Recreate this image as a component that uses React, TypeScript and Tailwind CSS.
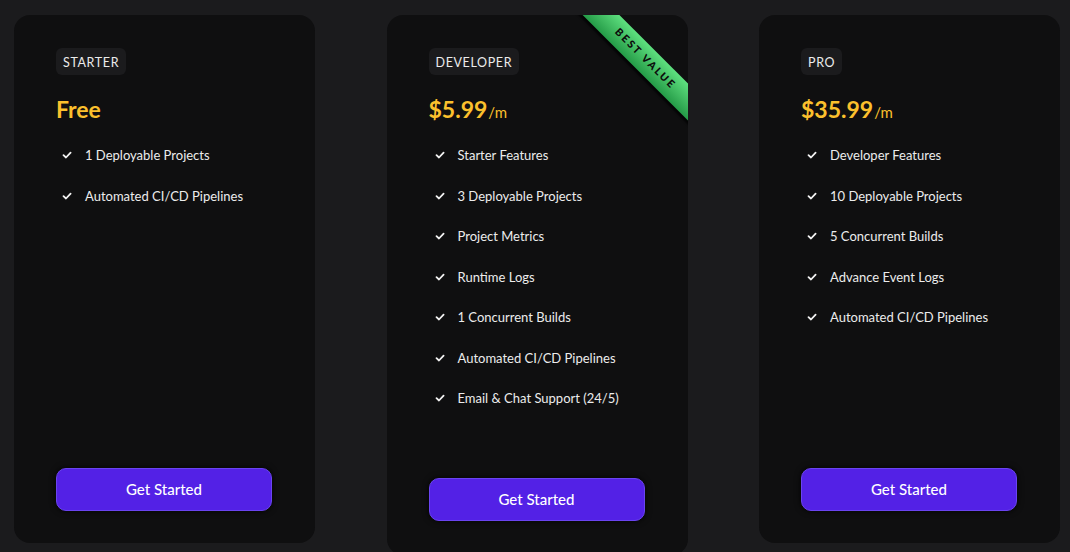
import React from 'react';

type Plan = {
  name: string;
  price: string;
  per?: string;
  features: string[];
  featured?: boolean;
};

const plans: Plan[] = [
  { name: 'STARTER', price: 'Free', features: ['1 Deployable Projects', 'Automated CI/CD Pipelines'] },
  {
    name: 'DEVELOPER',
    price: '$5.99',
    per: '/m',
    featured: true,
    features: [
      'Starter Features',
      '3 Deployable Projects',
      'Project Metrics',
      'Runtime Logs',
      '1 Concurrent Builds',
      'Automated CI/CD Pipelines',
      'Email & Chat Support (24/5)',
    ],
  },
  {
    name: 'PRO',
    price: '$35.99',
    per: '/m',
    features: [
      'Developer Features',
      '10 Deployable Projects',
      '5 Concurrent Builds',
      'Advance Event Logs',
      'Automated CI/CD Pipelines',
    ],
  },
];

const Check = () => (
  <svg width="10" height="10" viewBox="0 0 10 10" className="shrink-0">
    <path d="M1.5 5.2 L4 7.5 L8.6 2.6" fill="none" stroke="#f2f2f2" strokeWidth="1.8" strokeLinecap="round" strokeLinejoin="round" />
  </svg>
);

const Card = ({ plan }: { plan: Plan }) => (
  <div
    className={`relative overflow-hidden w-[301px] shrink-0 rounded-2xl bg-[#0f0f10] px-[42px] pt-[33px] pb-[32px] flex flex-col ${
      plan.featured ? 'h-[540px]' : 'h-[528px]'
    }`}
  >
    {plan.featured && (
      <div className="absolute left-[157px] top-[30px] w-[200px] h-[26px] rotate-45 bg-gradient-to-b from-[#5ee07f] to-[#249c48] shadow-[0_3px_2px_rgba(0,0,0,0.7)] flex items-center justify-center">
        <span className="text-[10.5px] font-black tracking-[0.2em] text-[#0b0b0b] pl-[3px]">BEST VALUE</span>
      </div>
    )}
    <div className="self-start rounded-md bg-[#1b1b1d] px-[7px] pt-[3px] h-[27px] flex items-center text-[12.5px] tracking-[0.05em] text-[#ececec]">
      {plan.name}
    </div>
    <div className="mt-[22px] h-[24px] flex items-end text-[#fbc02d]">
      <span className="text-[23px] font-bold leading-none">{plan.price}</span>
      {plan.per && <span className="text-[15px] leading-none ml-[1px] mb-[1px]">{plan.per}</span>}
    </div>
    <ul className="mt-[25px] flex flex-col gap-[22.5px]">
      {plan.features.map((f) => (
        <li key={f} className="flex items-center gap-[13px] pl-[6px] text-[13px] leading-[18px] text-[#ececec]">
          <Check />
          {f}
        </li>
      ))}
    </ul>
    <button
      className={`mt-auto ${plan.featured ? 'mb-[2px]' : ''} h-[43px] w-[216px] rounded-[10px] bg-[#5321e6] border border-[#6a44f0] text-[15px] font-medium text-white shadow-[0_0_6px_rgba(0,0,0,0.9)]`}
    >
      Get Started
    </button>
  </div>
);

export default function App() {
  return (
    <div
      className="w-[1070px] h-[552px] overflow-hidden bg-[#1b1b1d] flex items-start gap-[71.5px] pl-[14px] pt-[15px]"
      style={{ fontFamily: 'Lato, "Open Sans", sans-serif' }}
    >
      {plans.map((p) => (
        <Card key={p.name} plan={p} />
      ))}
    </div>
  );
}
